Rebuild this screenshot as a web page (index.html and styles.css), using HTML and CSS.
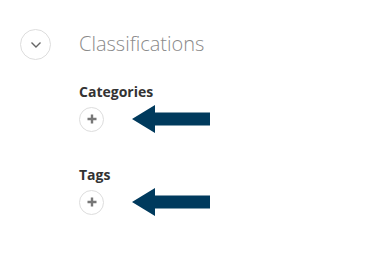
FILE: index.html
```html
<!DOCTYPE html>
<html>
<head>
<meta charset="utf-8">
<link rel="stylesheet" href="styles.css">
</head>
<body>
<div class="section">
  <div class="header">
    <button class="toggle" aria-label="collapse">
      <svg width="12" height="8" viewBox="0 0 12 8"><path d="M1.5 1.5 L6 6 L10.5 1.5" fill="none" stroke="#666" stroke-width="1.4"/></svg>
    </button>
    <h2 class="title">Classifications</h2>
  </div>
  <div class="body">
    <div class="group">
      <div class="label">Categories</div>
      <div class="row">
        <button class="add" aria-label="add category">
          <svg width="10" height="10" viewBox="0 0 10 10"><path d="M5 0.5V9.5M0.5 5H9.5" stroke="#777" stroke-width="2.4"/></svg>
        </button>
        <svg class="arrow" width="78" height="28" viewBox="0 0 78 28"><path d="M0 14 L23 0 L23 7.5 L78 7.5 L78 20.5 L23 20.5 L23 28 Z" fill="#003a5d"/></svg>
      </div>
    </div>
    <div class="group">
      <div class="label">Tags</div>
      <div class="row">
        <button class="add" aria-label="add tag">
          <svg width="10" height="10" viewBox="0 0 10 10"><path d="M5 0.5V9.5M0.5 5H9.5" stroke="#777" stroke-width="2.4"/></svg>
        </button>
        <svg class="arrow" width="78" height="28" viewBox="0 0 78 28"><path d="M0 14 L23 0 L23 7.5 L78 7.5 L78 20.5 L23 20.5 L23 28 Z" fill="#003a5d"/></svg>
      </div>
    </div>
  </div>
</div>
</body>
</html>
```
FILE: styles.css
```css
html, body { margin: 0; padding: 0; background: #fff; }
body { font-family: "Open Sans", "Liberation Sans", sans-serif; }
.section { padding: 29px 0 0 20px; }
.header { display: flex; align-items: center; gap: 28px; }
.toggle {
  width: 31px; height: 31px; border-radius: 50%;
  border: 1px solid #ddd; background: #fff; padding: 0;
  display: flex; align-items: center; justify-content: center;
}
.title { margin: 0; font-size: 20px; font-weight: 300; color: #8a8a8a; line-height: 26px; position: relative; top: -1px; }
.body { padding-left: 59px; padding-top: 22px; }
.group { margin-bottom: 32px; }
.label { font-size: 14px; font-weight: 700; color: #333; line-height: 19px; }
.row { display: flex; align-items: center; gap: 28px; margin-top: 4px; }
.add {
  width: 25px; height: 25px; border-radius: 50%;
  border: 1px solid #ddd; background: #fff; padding: 0;
  display: flex; align-items: center; justify-content: center;
}
.arrow { display: block; }
```
